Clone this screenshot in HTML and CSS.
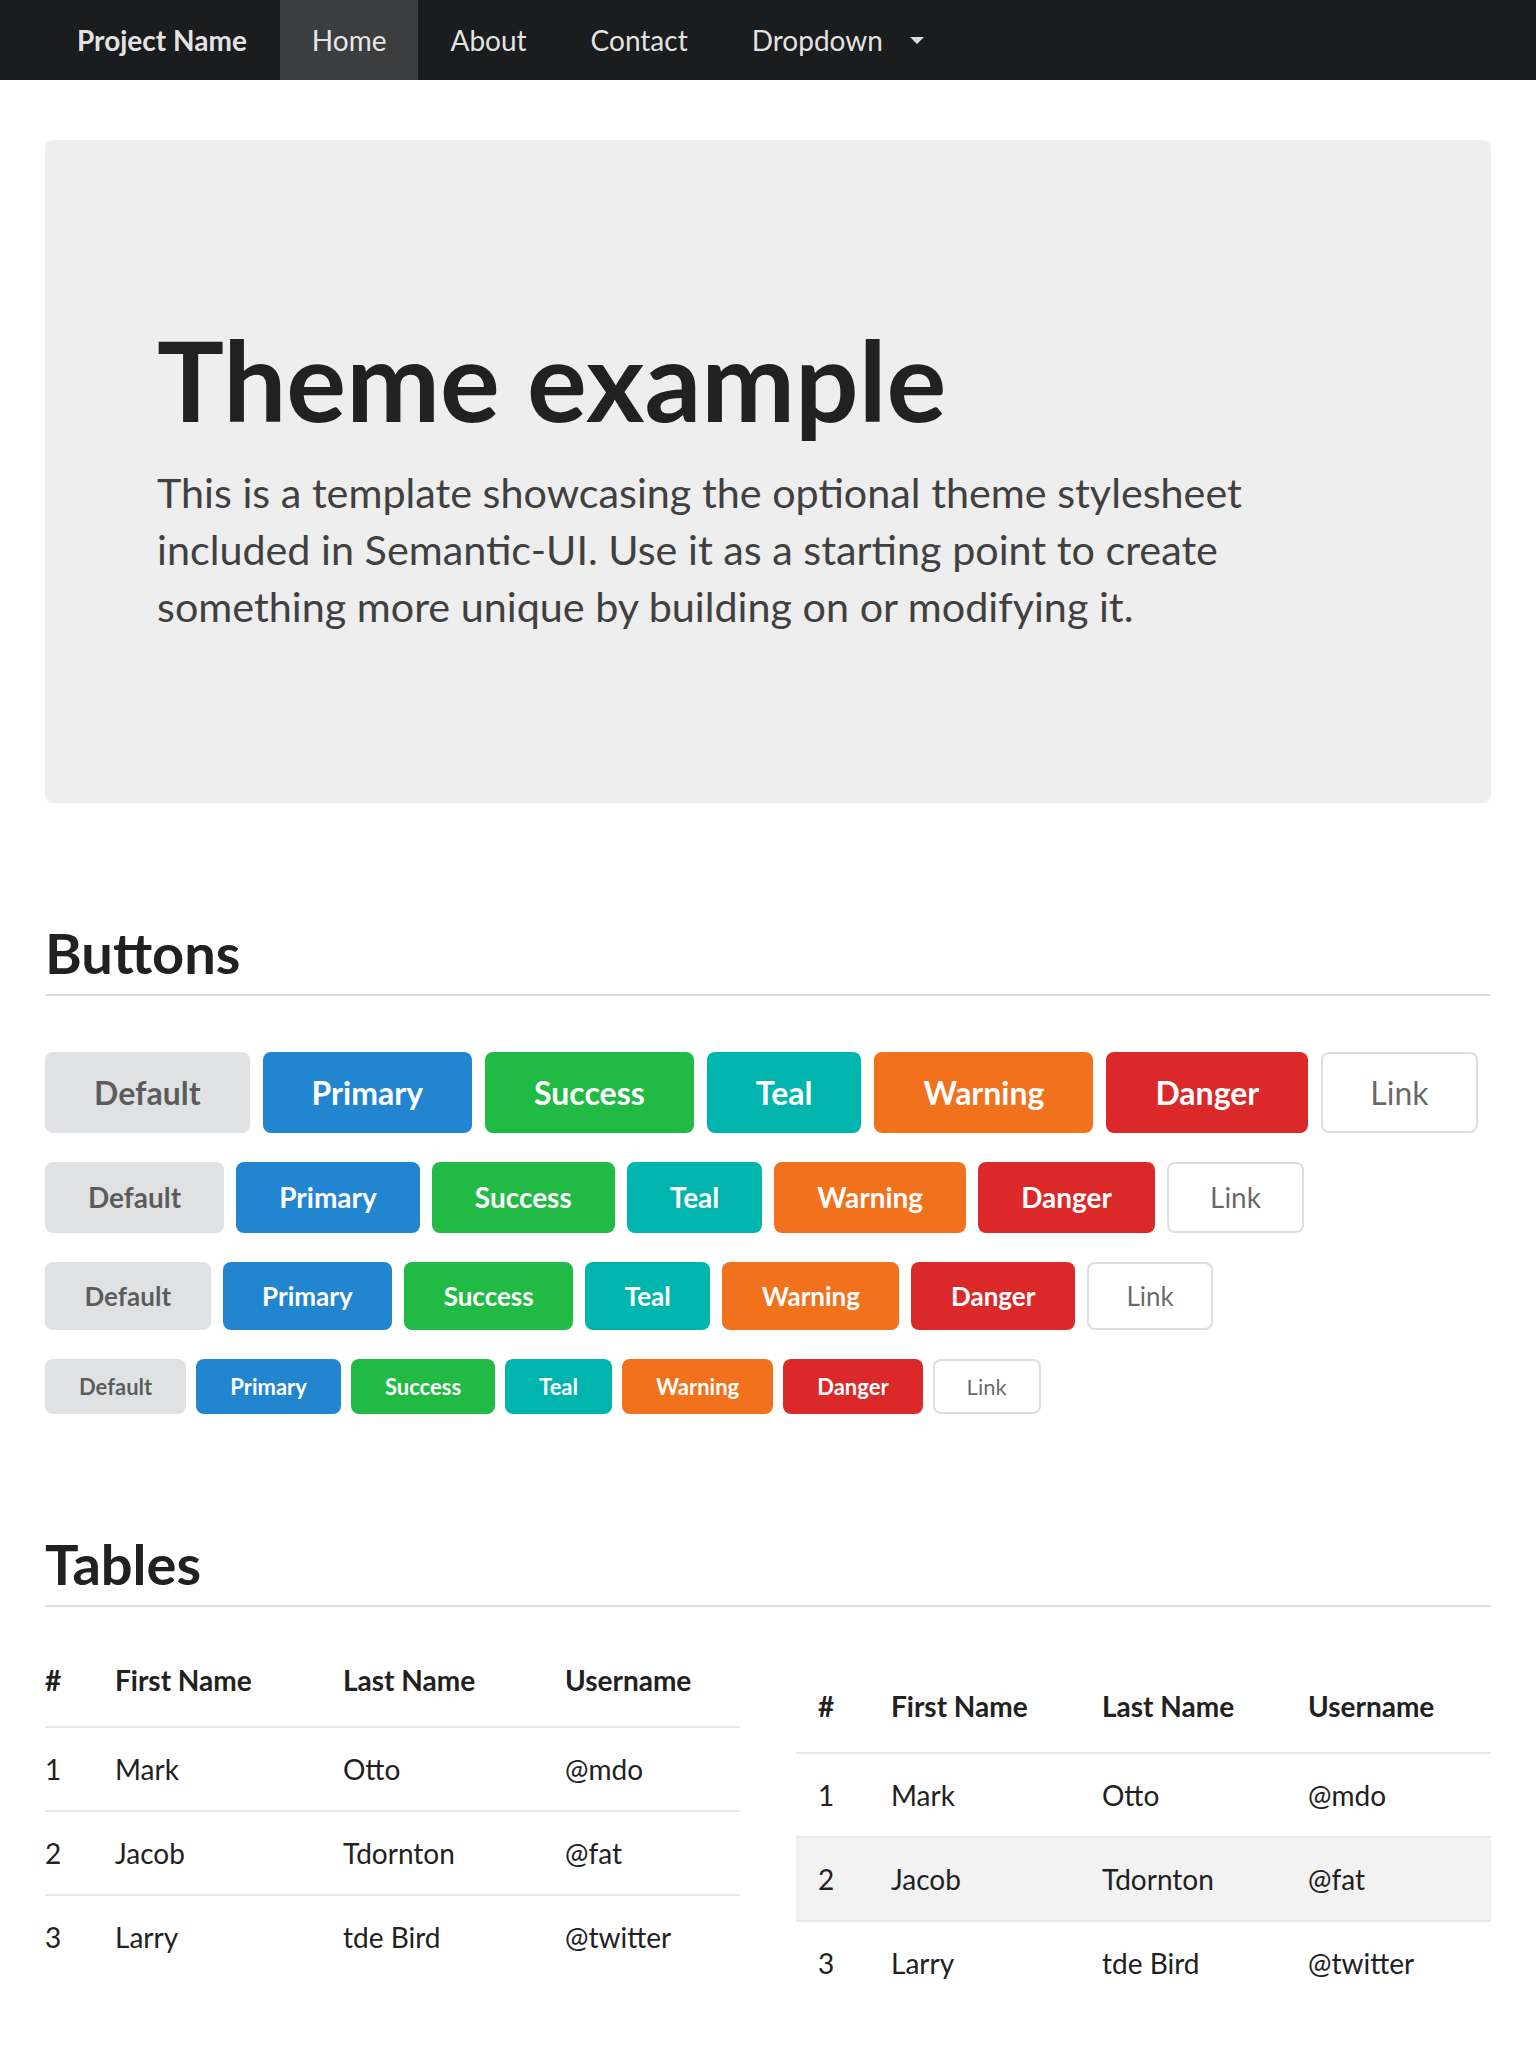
FILE: index.html
```html
<!DOCTYPE html>
<html lang="en">
<head>
<meta charset="utf-8">
<title>Theme example</title>
<link rel="stylesheet" href="styles.css">
</head>
<body>
<nav class="navbar">
  <div class="container nav-inner">
    <a class="nav-item nav-brand">Project Name</a>
    <a class="nav-item active">Home</a>
    <a class="nav-item">About</a>
    <a class="nav-item">Contact</a>
    <a class="nav-item">Dropdown<span class="caret"></span></a>
  </div>
</nav>
<main class="container">
  <section class="jumbotron">
    <h1>Theme example</h1>
    <p>This is a template showcasing the optional theme stylesheet included in Semantic-UI. Use it as a starting point to create something more unique by building on or modifying it.</p>
  </section>

  <h2 class="section-title">Buttons</h2>
  <div class="btn-row first">
    <a class="btn btn-lg default">Default</a>
    <a class="btn btn-lg primary">Primary</a>
    <a class="btn btn-lg success">Success</a>
    <a class="btn btn-lg teal">Teal</a>
    <a class="btn btn-lg warning">Warning</a>
    <a class="btn btn-lg danger">Danger</a>
    <a class="btn btn-lg link">Link</a>
  </div>
  <div class="btn-row">
    <a class="btn btn-md default">Default</a>
    <a class="btn btn-md primary">Primary</a>
    <a class="btn btn-md success">Success</a>
    <a class="btn btn-md teal">Teal</a>
    <a class="btn btn-md warning">Warning</a>
    <a class="btn btn-md danger">Danger</a>
    <a class="btn btn-md link">Link</a>
  </div>
  <div class="btn-row">
    <a class="btn btn-sm default">Default</a>
    <a class="btn btn-sm primary">Primary</a>
    <a class="btn btn-sm success">Success</a>
    <a class="btn btn-sm teal">Teal</a>
    <a class="btn btn-sm warning">Warning</a>
    <a class="btn btn-sm danger">Danger</a>
    <a class="btn btn-sm link">Link</a>
  </div>
  <div class="btn-row">
    <a class="btn btn-xs default">Default</a>
    <a class="btn btn-xs primary">Primary</a>
    <a class="btn btn-xs success">Success</a>
    <a class="btn btn-xs teal">Teal</a>
    <a class="btn btn-xs warning">Warning</a>
    <a class="btn btn-xs danger">Danger</a>
    <a class="btn btn-xs link">Link</a>
  </div>

  <h2 class="section-title">Tables</h2>
  <div class="tables">
    <table class="tbl very-basic">
      <colgroup><col class="c1a"><col class="c2a"><col class="c3a"><col></colgroup>
      <thead>
        <tr><th>#</th><th>First Name</th><th>Last Name</th><th>Username</th></tr>
      </thead>
      <tbody>
        <tr><td>1</td><td>Mark</td><td>Otto</td><td>@mdo</td></tr>
        <tr><td>2</td><td>Jacob</td><td>Tdornton</td><td>@fat</td></tr>
        <tr><td>3</td><td>Larry</td><td>tde Bird</td><td>@twitter</td></tr>
      </tbody>
    </table>
    <table class="tbl striped">
      <colgroup><col class="c1b"><col class="c2b"><col class="c3b"><col></colgroup>
      <thead>
        <tr><th>#</th><th>First Name</th><th>Last Name</th><th>Username</th></tr>
      </thead>
      <tbody>
        <tr><td>1</td><td>Mark</td><td>Otto</td><td>@mdo</td></tr>
        <tr><td>2</td><td>Jacob</td><td>Tdornton</td><td>@fat</td></tr>
        <tr><td>3</td><td>Larry</td><td>tde Bird</td><td>@twitter</td></tr>
      </tbody>
    </table>
  </div>
</main>
</body>
</html>
```

FILE: styles.css
```css
* { box-sizing: border-box; }

body {
  margin: 0;
  font-family: Lato, "Noto Sans", "Liberation Sans", sans-serif;
  font-size: 28px;
  color: #212121;
  background: #ffffff;
}

.container {
  width: 1446px;
  margin: 0 auto;
}

/* Navbar */
.navbar {
  background: #1b1c1d;
  height: 80px;
}

.nav-inner {
  display: flex;
  height: 80px;
}

.nav-item {
  display: flex;
  align-items: center;
  padding: 0 32px;
  color: rgba(255, 255, 255, 0.9);
  font-size: 28px;
  line-height: 28px;
  text-decoration: none;
}

.nav-brand {
  font-weight: 700;
  padding-right: 33px;
}

.nav-item.active {
  background: rgba(255, 255, 255, 0.15);
}

.caret {
  display: inline-block;
  width: 0;
  height: 0;
  margin-left: 27px;
  border-left: 7px solid transparent;
  border-right: 7px solid transparent;
  border-top: 7px solid rgba(255, 255, 255, 0.85);
}

/* Jumbotron */
.jumbotron {
  margin-top: 60px;
  background: #eeeeee;
  border-radius: 8px;
  padding: 172px 112px 168px;
}

.jumbotron h1 {
  margin: 0;
  font-size: 112px;
  line-height: 134px;
  font-weight: 700;
  color: #212121;
}

.jumbotron p {
  margin: 18px 0 0;
  font-size: 41.3px;
  line-height: 57px;
  color: #404040;
}

/* Section titles */
.section-title {
  margin: 116px 0 0;
  padding-bottom: 8px;
  border-bottom: 2px solid #dedede;
  font-size: 56px;
  line-height: 67px;
  font-weight: 700;
  color: #212121;
}

/* Buttons */
.btn-row {
  display: flex;
  margin-top: 29px;
}

.btn-row.first {
  margin-top: 56px;
}

.btn {
  display: block;
  border-radius: 8px;
  font-weight: 700;
  color: #ffffff;
  text-decoration: none;
  white-space: nowrap;
}

.btn-lg {
  font-size: 32px;
  line-height: 33px;
  padding: 24px 49px;
  margin-right: 13px;
}

.btn-md {
  font-size: 28px;
  line-height: 29px;
  padding: 21px 43px;
  margin-right: 12px;
}

.btn-sm {
  font-size: 26px;
  line-height: 26px;
  padding: 21px 39.5px;
  margin-right: 12px;
}

.btn-xs {
  font-size: 22px;
  line-height: 23px;
  padding: 16px 34px;
  margin-right: 10px;
}

.default { background: #e0e1e2; color: rgba(0, 0, 0, 0.6); }
.primary { background: #2185d0; }
.success { background: #21ba45; }
.teal { background: #00b5ad; }
.warning { background: #f2711c; }
.danger { background: #db2828; }

.link {
  background: #ffffff;
  color: rgba(0, 0, 0, 0.6);
  font-weight: 400;
  box-shadow: inset 0 0 0 2px rgba(34, 36, 38, 0.15);
}

/* Tables */
.tables {
  display: grid;
  grid-template-columns: 1fr 1fr;
  column-gap: 56px;
  align-items: start;
  margin-top: 53px;
}

.tbl {
  width: 100%;
  border-collapse: collapse;
  table-layout: fixed;
  font-size: 28px;
  color: #212121;
}

.tbl th {
  text-align: left;
  font-weight: 700;
  line-height: 40px;
  padding: 26px 22px;
}

.tbl td {
  line-height: 40px;
  padding: 21px 22px;
  border-top: 2px solid #e8e8e8;
}

.very-basic th {
  padding-top: 0;
}

.very-basic th:first-child,
.very-basic td:first-child {
  padding-left: 0;
}

.very-basic th:last-child,
.very-basic td:last-child {
  padding-right: 0;
}

.c1a { width: 48px; }
.c2a { width: 228px; }
.c3a { width: 222px; }

.c1b { width: 73px; }
.c2b { width: 211px; }
.c3b { width: 206px; }

.striped tbody tr:nth-child(2) {
  background: #f2f2f2;
}
```
